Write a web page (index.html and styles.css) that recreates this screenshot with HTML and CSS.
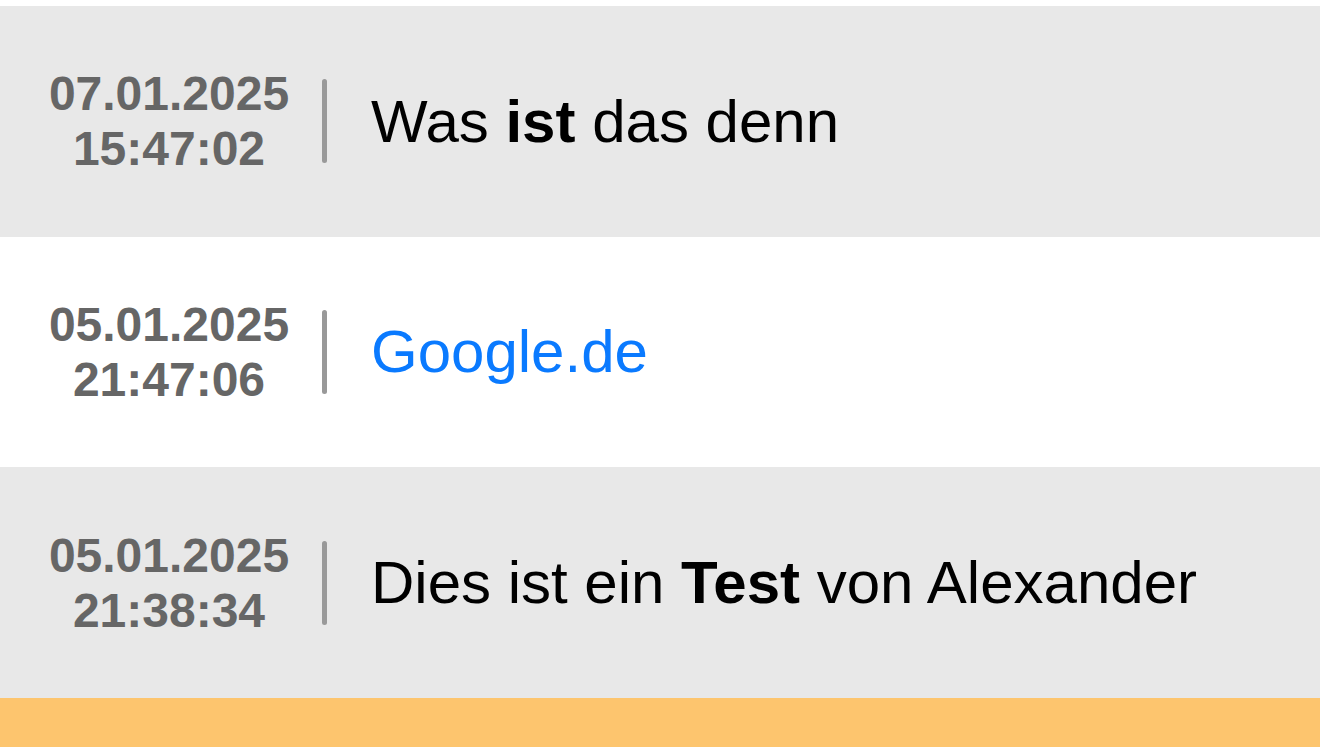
FILE: index.html
```html
<!DOCTYPE html>
<html lang="de">
<head>
    <meta charset="UTF-8">
    <meta name="viewport" content="width=device-width, initial-scale=1.0">
    <title>Verlauf</title>
    <link rel="stylesheet" href="styles.css">
</head>
<body>

<main class="history">
    <div class="entry entry-alt">
        <div class="stamp">07.01.2025<br>15:47:02</div>
        <div class="bar"></div>
        <div class="note">Was <b>ist</b> das denn</div>
    </div>

    <div class="entry">
        <div class="stamp">05.01.2025<br>21:47:06</div>
        <div class="bar"></div>
        <div class="note link">Google.de</div>
    </div>

    <div class="entry entry-alt">
        <div class="stamp">05.01.2025<br>21:38:34</div>
        <div class="bar"></div>
        <div class="note">Dies ist ein <b>Test</b> von Alexander</div>
    </div>

    <div class="footer"></div>
</main>

</body>
</html>
```

FILE: styles.css
```css
html, body {
    margin: 0;
    height: 100%;
}
body {
    background-color: #ffffff;
    font-family: "Liberation Sans", Arial, sans-serif;
}

.history {
    display: flex;
    flex-direction: column;
    height: 100%;
    padding-top: 6px;
    box-sizing: border-box;
}
.entry {
    display: flex;
    align-items: center;
    height: 230.67px;
    flex-shrink: 0;
    padding-left: 44px;
    box-sizing: border-box;
    background-color: #ffffff;
}
.entry-alt {background-color: #e8e8e8;}

.stamp {
    width: 250px;
    text-align: center;
    font-size: 48px;
    font-weight: bold;
    line-height: 55px;
    color: #666666;
}
.bar {
    width: 5px;
    height: 84px;
    margin-left: 28px;
    border-radius: 3px;
    background-color: #999999;
}
.note {
    margin-left: 44px;
    font-size: 60px;
    color: #000000;
    white-space: nowrap;
}
.link {color: #0a7aff;}

.footer {
    flex: 1;
    background-color: #fdc56e;
}
```
